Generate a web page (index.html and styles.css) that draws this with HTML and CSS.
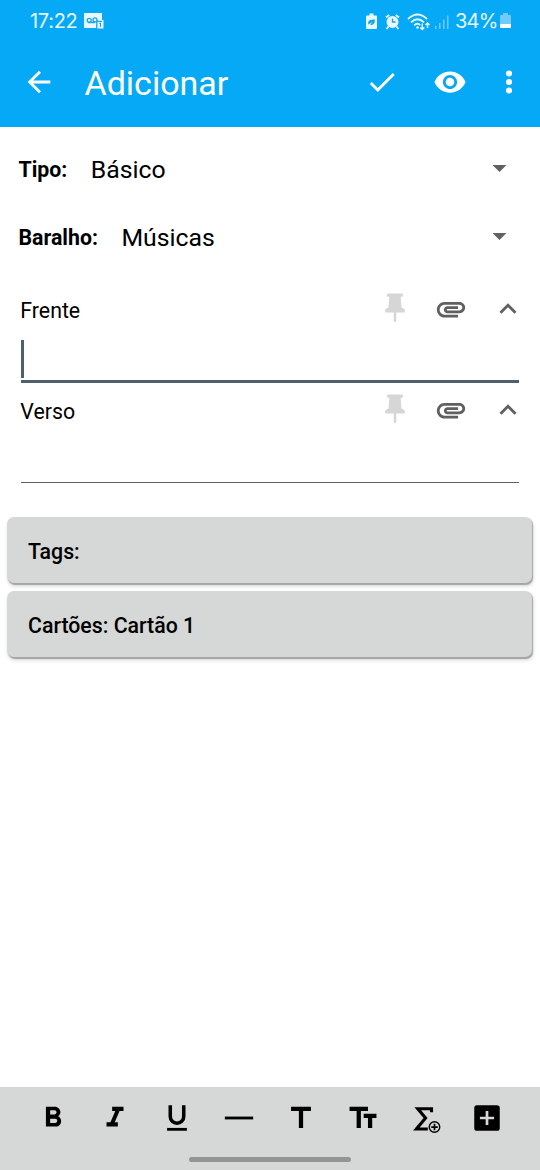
FILE: index.html
```html
<!DOCTYPE html>
<html lang="pt-BR">
<head>
<meta charset="utf-8">
<title>Adicionar</title>
<link rel="stylesheet" href="styles.css">
</head>
<body>
<svg class="defs" width="0" height="0" aria-hidden="true">
  <symbol id="pin" viewBox="0 0 24 24"><path d="M6.300 2c0-.6.4-.9 1-.9h9.400c.6 0 1 .3 1 .9v.5c0 .6-.4.900-1 .9h-.7l.6 7.600c1.700.5 2.500 1.600 2.500 2.800 0 .4-.3.600-.7.600h-5.500v5.900c0 .5-.4.900-.9.900s-.9-.4-.9-.9v-5.900H5.600c-.4 0-.7-.2-.7-.6 0-1.200.8-2.300 2.500-2.800L8 3.400h-.7c-.6 0-1-.3-1-.9z"/></symbol>
  <symbol id="clip" viewBox="0 0 24 24"><path d="M2 12.500C2 9.460 4.460 7 7.500 7H18c2.210 0 4 1.790 4 4s-1.790 4-4 4H9.500C8.120 15 7 13.880 7 12.500S8.120 10 9.500 10H17v2H9.410c-.55 0-.55 1 0 1H18c1.100 0 2-.9 2-2s-.9-2-2-2H7.500C5.570 9 4 10.570 4 12.500S5.570 16 7.500 16H17v2H7.500C4.460 18 2 15.540 2 12.500z"/></symbol>
  <symbol id="up" viewBox="0 0 24 24"><path d="M12 8l-6 6 1.410 1.410L12 10.830l4.590 4.580L18 14z"/></symbol>
</svg>
<header class="header">
  <div class="status">
    <span class="clock">17:22</span>
    <svg class="voicemail" width="20" height="16" viewBox="0 0 20 16"><path fill="#e9f8ff" d="M0 0h18v7h1.500v8.500h-6V15H0z"/><g fill="none" stroke="#12a7ed" stroke-width="1.300"><circle cx="5.200" cy="7.300" r="2"/><circle cx="11" cy="6.900" r="2"/><path d="M4 9.500h7M12.800 15V8.300H18"/></g><path d="M15.200 10.500l1.300-.5V14" fill="none" stroke="#12a7ed"/></svg>
    <svg class="status-icons" width="84" height="20" viewBox="0 0 84 20">
      <path fill="#e9f8ff" d="M3.500 2.500h4v2H10q1 0 1 1V17q0 1-1 1H1q-1 0-1-1V5.500q0-1 1-1h2.500z"/>
      <path fill="#12a7ed" d="M2.500 13.500C1 9 5 8.500 9 8.500c0 4-2 6-5 5.500l2.500-3-4 2.500z"/>
      <circle cx="26.500" cy="11" r="6" fill="#e9f8ff"/><path d="M20 6.500l3.200-2.500M33 6.500L29.800 4M22.500 15.500L20.500 18M30.500 15.500l2 2.500" stroke="#e9f8ff" stroke-width="1.800"/><path d="M26.500 7.500V11h3" fill="none" stroke="#12a7ed" stroke-width="1.300"/>
      <g fill="none" stroke="#e9f8ff" stroke-width="1.800"><path d="M42 8q9.500-9 19 0M45 11.300q6.500-6 13 0M48.200 14.200q3.300-2.800 6 0"/><path d="M56.300 12.500v6M54.300 16.500l2 2 2-2M61.500 17v-5M59.500 14l2-2 2 2" stroke-width="1.400"/></g><circle cx="51.500" cy="16.500" r="1.300" fill="#e9f8ff"/>
      <g fill="#71cbfa"><path d="M69 15h1.500v3H69zM73 12h1.500v6H73zM77 8.500h1.500V18H77zM81 4.500h1.500V18H81z"/></g>
    </svg>
    <span class="percent">34%</span>
    <svg class="battery" width="11" height="16" viewBox="0 0 11 16"><path fill="#71cbfa" d="M3 0h5v2h2q1 0 1 1v8H0V3q0-1 1-1h2z"/><path fill="#fff" d="M0 11h11v3q0 1-1 1H1q-1 0-1-1z"/></svg>
  </div>
  <div class="appbar">
    <svg class="icon back" viewBox="0 0 24 24"><path d="M20 11H7.830l5.590-5.590L12 4l-8 8 8 8 1.410-1.410L7.830 13H20z"/></svg>
    <h1 class="title">Adicionar</h1>
    <svg class="icon check" viewBox="0 0 24 24"><path d="M9 16.170L4.830 12l-1.420 1.410L9 19 21 7l-1.410-1.410z"/></svg>
    <svg class="icon eye" viewBox="0 0 24 24"><path d="M12 4.500C7 4.500 2.730 7.610 1 12c1.730 4.390 6 7.500 11 7.500s9.270-3.110 11-7.500c-1.730-4.390-6-7.500-11-7.500zM12 17c-2.760 0-5-2.240-5-5s2.240-5 5-5 5 2.240 5 5-2.240 5-5 5zm0-8c-1.660 0-3 1.340-3 3s1.340 3 3 3 3-1.340 3-3-1.340-3-3-3z"/></svg>
    <svg class="icon more" viewBox="0 0 24 24"><circle cx="12" cy="6" r="2.150"/><circle cx="12" cy="12" r="2.150"/><circle cx="12" cy="18" r="2.150"/></svg>
  </div>
</header>
<main class="editor">
  <div class="select"><b class="label">Tipo:</b><span class="value">Básico</span><i class="caret"></i></div>
  <div class="select second"><b class="label">Baralho:</b><span class="value">Músicas</span><i class="caret"></i></div>
  <section class="field focused">
    <div class="field-head"><span class="name">Frente</span><svg class="icon pin"><use href="#pin"/></svg><svg class="icon clip"><use href="#clip"/></svg><svg class="icon up"><use href="#up"/></svg></div>
    <div class="input"><span class="cursor"></span></div>
  </section>
  <section class="field">
    <div class="field-head"><span class="name">Verso</span><svg class="icon pin"><use href="#pin"/></svg><svg class="icon clip"><use href="#clip"/></svg><svg class="icon up"><use href="#up"/></svg></div>
    <div class="input"></div>
  </section>
  <div class="buttons">
    <div class="button tags">Tags:</div>
    <div class="button cards">Cartões: Cartão 1</div>
  </div>
</main>
<footer class="footer">
  <div class="tools">
    <svg class="icon" viewBox="0 0 24 24"><path d="M15.600 10.790c.97-.67 1.650-1.770 1.650-2.790 0-2.260-1.750-4-4-4H7v14h7.040c2.090 0 3.710-1.700 3.710-3.790 0-1.520-.86-2.820-2.150-3.420zM10 6.500h3c.83 0 1.500.67 1.500 1.500s-.67 1.500-1.500 1.500h-3v-3zm3.500 9H10v-3h3.500c.83 0 1.500.67 1.500 1.500s-.67 1.500-1.500 1.500z"/></svg>
    <svg class="icon" viewBox="0 0 24 24"><path d="M10 4v3h2.210l-3.420 8H6v3h8v-3h-2.210l3.420-8H18V4z"/></svg>
    <svg class="icon" viewBox="0 0 24 24"><path d="M7.250 3v8a4.750 4.750 0 0 0 9.500 0V3" fill="none" stroke="#000" stroke-width="2.500"/><path d="M5 19h14v2H5z"/></svg>
    <svg class="icon" viewBox="0 0 24 24"><path d="M2 11h20v2H2z"/></svg>
    <svg class="icon" viewBox="0 0 24 24"><path d="M5 4h14v3h-5.500v12h-3V7H5z"/></svg>
    <svg class="icon" viewBox="0 0 24 24"><path d="M2.500 4h13v3h-5v12h-3V7h-5zM12.500 9h9v3h-3v7h-3v-7h-3z"/></svg>
    <svg class="icon" viewBox="0 0 24 24"><path d="M16.600 8V5.500H6.900L12.400 12l-6.500 7.800H14" fill="none" stroke="#000" stroke-width="2.200"/><g fill="none" stroke="#000"><circle cx="18.700" cy="18.400" r="3.700"/><path d="M18.700 16.100v4.600M16.400 18.400h4.600" stroke-width="1.200"/></g></svg>
    <svg class="icon" viewBox="0 0 24 24"><rect x="3" y="3" width="18" height="18" rx="2"/><path d="M12 7v10M7 12h10" stroke="#d6d8d7" stroke-width="1.900"/></svg>
  </div>
  <div class="home"></div>
</footer>
</body>
</html>
```
FILE: styles.css
```css
* { box-sizing: border-box; }
body {
  margin: 0;
  width: 540px;
  height: 1170px;
  display: flex;
  flex-direction: column;
  background: #fff;
  color: #000;
  font-family: Roboto, "Liberation Sans", sans-serif;
  overflow: hidden;
}
.defs { position: absolute; }
.icon { width: 34px; height: 34px; flex: none; display: block; }
.header { height: 127px; background: #05a9f6; color: #fff; fill: #fff; }
.status {
  height: 40px;
  padding: 1px 29px 0 30px;
  display: flex;
  align-items: center;
  font: 20px/40px Inter, sans-serif;
  color: #e9f8ff;
}
.clock { width: 54px; letter-spacing: -0.3px; }
.voicemail { margin-right: auto; }
.status-icons { margin-right: 5px; }
.percent { width: 45px; letter-spacing: -0.8px; }
.appbar { height: 85px; padding: 0 14.500px 0 22px; display: flex; align-items: center; }
.appbar .icon { margin-top: -1px; }
.title { margin: 0 auto 0 28.500px; font-size: 34px; line-height: 40px; font-weight: 400; }
.check { margin-right: 34px; }
.eye { margin-right: 25px; }
.editor { flex: 1; }
.select {
  height: 68px;
  padding: 0 33.500px 0 18.500px;
  display: flex;
  align-items: center;
}
.select:first-child { margin-top: 8px; }
.label { font-size: 21.300px; font-weight: 700; margin-right: 23.500px; }
.value { font-size: 24.800px; flex: 1; }
.caret {
  width: 14px;
  height: 7px;
  margin-top: -1px;
  background: #616161;
  clip-path: polygon(0 0, 100% 0, 50% 100%);
}
.field { height: 101px; padding: 0 21px; }
.second { margin-bottom: 14px; }
.field-head { height: 50px; display: flex; align-items: center; margin: 0 -5.500px 0 -0.700px; fill: #606060; }
.field-head .icon { margin-top: -2px; }
.name { flex: 1; font-size: 21.300px; }
.pin { fill: #d6d6d6; margin-right: 22.500px; }
.clip { margin-right: 22.500px; }
.input { height: 47px; padding-top: 5px; border-bottom: 1px solid #606060; }
.focused .input { height: 48px; border-bottom: 3px solid #4c606d; }
.cursor { display: block; width: 3px; height: 38px; background: #4c606d; }
.buttons { padding: 30px 8px 0 7px; display: grid; gap: 8px; }
.button {
  height: 66px;
  padding: 2px 21px 0;
  display: flex;
  align-items: center;
  border-radius: 7px;
  background: #d6d8d7;
  box-shadow: 1px 1.500px 1px #a4a6a5, 1px 3px 4px rgba(0, 0, 0, .16);
  font-size: 21.300px;
  font-weight: 500;
}
.footer { height: 83px; background: #d6d8d7; }
.tools { height: 70px; padding: 14px 22px 0; display: grid; grid-template-columns: repeat(8, 62px); justify-items: center; align-items: start; }
.home { width: 162px; height: 5px; margin: 0 auto; border-radius: 3px; background: #939494; }
```
